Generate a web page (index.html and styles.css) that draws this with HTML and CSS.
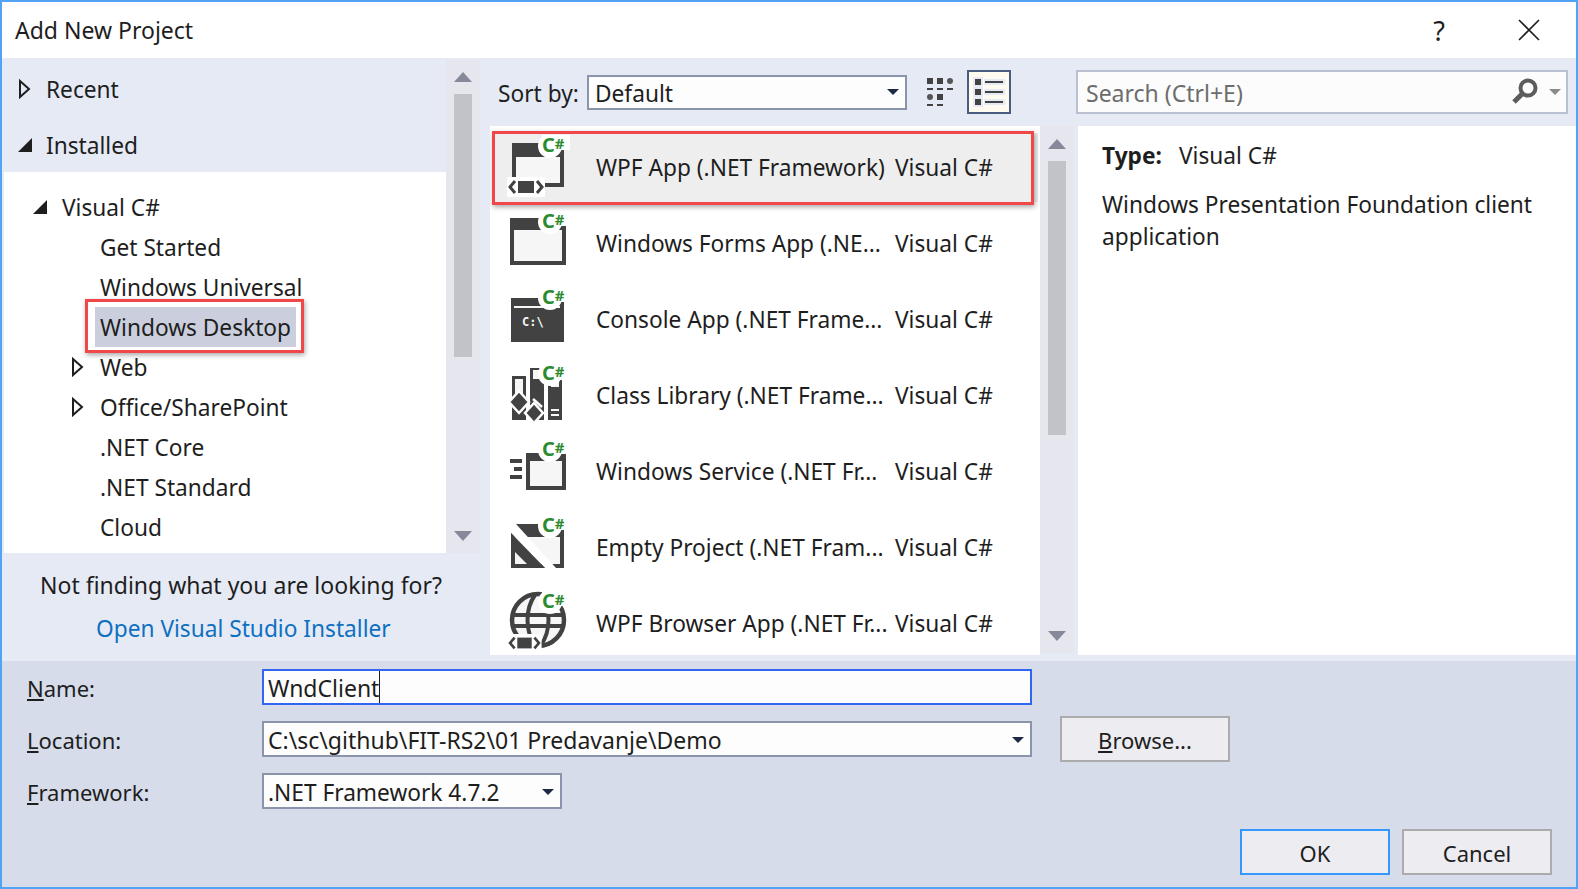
FILE: index.html
```html
<!DOCTYPE html>
<html lang="en">
<head>
  <meta charset="UTF-8" />
  <title>Add New Project</title>
  <link rel="stylesheet" href="styles.css">
</head>
<body>
  <svg class="defs" aria-hidden="true">
    <symbol id="halo" viewBox="0 0 66 66">
      <circle cx="46" cy="11" r="12" fill="#fff"/>
      <rect x="38" y="0" width="28" height="15" fill="#fff"/>
    </symbol>
    <symbol id="xaml" viewBox="0 0 38 20">
      <rect x="0" y="0" width="38" height="20" fill="#fff"/>
      <path d="M8 4 3 10l5 6M30 4l5 6-5 6" fill="none" stroke="#424242" stroke-width="3"/>
      <rect x="11" y="4" width="16" height="12" fill="#424242"/>
    </symbol>
  </svg>

  <div class="dialog">
    <header class="titlebar">
      <span class="title">Add New Project</span>
      <span class="help">?</span>
      <svg class="close" width="22" height="22" viewBox="0 0 22 22"><path d="M1 1 21 21M21 1 1 21" stroke="#1e1e1e" stroke-width="1.6" fill="none"/></svg>
    </header>

    <div class="main">
      <aside class="left">
        <div class="left-top">
          <nav class="nav">
            <div class="nav-head">
              <div class="head-row">
                <svg class="arrow" width="14" height="20" viewBox="0 0 14 20"><path d="M3 2 12 10 3 18Z" fill="none" stroke="#1e1e1e" stroke-width="2"/></svg>
                Recent
              </div>
              <div class="head-row">
                <svg class="arrow arrow-open" width="16" height="16" viewBox="0 0 16 16"><path d="M15 1V15H1Z" fill="#1e1e1e"/></svg>
                Installed
              </div>
            </div>
            <div class="tree">
              <div class="tree-row lvl1">
                <svg class="arrow" width="16" height="16" viewBox="0 0 16 16"><path d="M15 1V15H1Z" fill="#1e1e1e"/></svg>
                Visual C#
              </div>
              <div class="tree-row lvl2"><span class="node">Get Started</span></div>
              <div class="tree-row lvl2"><span class="node">Windows Universal</span></div>
              <div class="tree-row lvl2"><span class="node node-sel">Windows Desktop</span></div>
              <div class="tree-row lvl2 has-arrow">
                <svg class="arrow" width="14" height="20" viewBox="0 0 14 20"><path d="M3 2 12 10 3 18Z" fill="none" stroke="#1e1e1e" stroke-width="2"/></svg>
                <span class="node">Web</span>
              </div>
              <div class="tree-row lvl2 has-arrow">
                <svg class="arrow" width="14" height="20" viewBox="0 0 14 20"><path d="M3 2 12 10 3 18Z" fill="none" stroke="#1e1e1e" stroke-width="2"/></svg>
                <span class="node">Office/SharePoint</span>
              </div>
              <div class="tree-row lvl2"><span class="node">.NET Core</span></div>
              <div class="tree-row lvl2"><span class="node">.NET Standard</span></div>
              <div class="tree-row lvl2"><span class="node">Cloud</span></div>
            </div>
          </nav>
          <div class="vscroll left-scroll">
            <span class="up"></span>
            <span class="thumb"></span>
            <span class="down"></span>
          </div>
        </div>
        <div class="finding">
          <p class="finding-q">Not finding what you are looking for?</p>
          <a class="finding-link">Open Visual Studio Installer</a>
        </div>
      </aside>

      <section class="content">
        <div class="toolbar">
          <span class="sort-label">Sort by:</span>
          <div class="combo sort-combo"><span class="combo-text">Default</span><span class="caret"></span></div>
          <svg class="grid-icon" width="28" height="30" viewBox="0 0 28 30">
            <path d="M0 1h6v6H0zM10 1h6v6h-6z" fill="#424242"/><circle cx="23" cy="4" r="3" fill="#555"/>
            <path d="M0 11h6v2H0zM10 11h6v2h-6zM20 11h6v2h-6z" fill="#424242"/>
            <circle cx="3" cy="20" r="3" fill="#555"/><path d="M10 17h6v6h-6z" fill="#424242"/>
            <path d="M0 27h6v2H0zM10 27h6v2h-6z" fill="#424242"/>
          </svg>
          <div class="list-btn">
            <svg width="32" height="30" viewBox="0 0 32 30">
              <path d="M0 0h10v30H0zM11 2h21v6H11zM11 12h21v6H11zM11 22h21v6H11z" fill="#e6eaf5"/>
              <path d="M2 2h6v6H2zM2 12h6v6H2zM2 22h6v6H2z" fill="#424242"/>
              <path d="M12 4h18v2H12zM12 14h18v2H12zM12 24h18v2H12z" fill="#424242"/>
            </svg>
          </div>
          <div class="search">
            <span class="search-text">Search (Ctrl+E)</span>
            <svg width="28" height="28" viewBox="0 0 28 28"><circle cx="17" cy="10" r="7.500" fill="none" stroke="#5c5c5c" stroke-width="4"/><path d="M12 15 3 24" stroke="#5c5c5c" stroke-width="5" fill="none"/></svg>
            <span class="caret caret-gray"></span>
          </div>
        </div>

        <div class="content-body">
          <div class="list">
            <div class="row row-sel">
              <span class="pic">
                <svg viewBox="0 0 66 66">
                  <rect x="8" y="8" width="52" height="44" fill="#424242"/>
                  <rect x="12" y="22" width="44" height="26" fill="#f6f6f6"/>
                  <use href="#xaml" x="3" y="42" width="38" height="20"/>
                  <use href="#halo" width="66" height="66"/>
                </svg>
                <span class="badge">C<span class="badge-h">#</span></span>
              </span>
              <span class="row-name">WPF App (.NET Framework)</span><span class="row-type">Visual C#</span>
            </div>
            <div class="row">
              <span class="pic">
                <svg viewBox="0 0 66 66">
                  <rect x="6" y="7" width="56" height="47" fill="#424242"/>
                  <rect x="10" y="19" width="48" height="31" fill="#f6f6f6"/>
                  <use href="#halo" width="66" height="66"/>
                </svg>
                <span class="badge">C<span class="badge-h">#</span></span>
              </span>
              <span class="row-name">Windows Forms App (.NE...</span><span class="row-type">Visual C#</span>
            </div>
            <div class="row">
              <span class="pic">
                <svg viewBox="0 0 66 66">
                  <rect x="7" y="11" width="53" height="44" fill="#424242"/>
                  <rect x="10" y="19" width="46" height="2" fill="#f6f6f6"/>
                  <use href="#halo" width="66" height="66"/>
                </svg>
                <span class="prompt">C:\</span>
                <span class="badge">C<span class="badge-h">#</span></span>
              </span>
              <span class="row-name">Console App (.NET Frame...</span><span class="row-type">Visual C#</span>
            </div>
            <div class="row">
              <span class="pic">
                <svg viewBox="0 0 66 66">
                  <rect x="8" y="13" width="14" height="44" fill="#424242"/>
                  <rect x="11" y="16" width="8" height="15" fill="#f6f6f6"/>
                  <rect x="26" y="5" width="14" height="52" fill="#424242"/>
                  <rect x="29" y="7" width="8" height="9" fill="#f6f6f6"/>
                  <rect x="44" y="17" width="14" height="40" fill="#424242"/>
                  <rect x="47" y="17" width="8" height="7" fill="#f6f6f6"/>
                  <rect x="47" y="46" width="8" height="2" fill="#f6f6f6"/>
                  <rect x="47" y="51" width="8" height="2" fill="#f6f6f6"/>
                  <path d="M15 28 25 39 15 50 5 39Z" fill="#424242" stroke="#fff" stroke-width="2.500"/>
                  <path d="M30 40 39 50 30 60 21 50Z" fill="#424242" stroke="#fff" stroke-width="2.500"/>
                  <path d="M29 36 38 44" stroke="#fff" stroke-width="2.500" fill="none"/>
                  <use href="#halo" width="66" height="66"/>
                </svg>
                <span class="badge">C<span class="badge-h">#</span></span>
              </span>
              <span class="row-name">Class Library (.NET Frame...</span><span class="row-type">Visual C#</span>
            </div>
            <div class="row">
              <span class="pic">
                <svg viewBox="0 0 66 66">
                  <rect x="22" y="14" width="40" height="37" fill="#424242"/>
                  <rect x="26" y="22" width="32" height="25" fill="#f6f6f6"/>
                  <path d="M6 20H18V24H6ZM10 28H18V32H10ZM6 36H18V40H6Z" fill="#424242"/>
                  <use href="#halo" width="66" height="66"/>
                </svg>
                <span class="badge">C<span class="badge-h">#</span></span>
              </span>
              <span class="row-name">Windows Service (.NET Fr...</span><span class="row-type">Visual C#</span>
            </div>
            <div class="row">
              <span class="pic">
                <svg viewBox="0 0 66 66">
                  <rect x="7" y="9" width="53" height="44" fill="#424242"/>
                  <rect x="11" y="22" width="45" height="27" fill="#f6f6f6"/>
                  <path d="M7 9H12L52 53H41L7 18Z" fill="#fff"/>
                  <path d="M7 18 41 53H27L7 33Z" fill="#424242"/>
                  <path d="M11 38 22 49H11Z" fill="#f6f6f6"/>
                  <use href="#halo" width="66" height="66"/>
                </svg>
                <span class="badge">C<span class="badge-h">#</span></span>
              </span>
              <span class="row-name">Empty Project (.NET Fram...</span><span class="row-type">Visual C#</span>
            </div>
            <div class="row">
              <span class="pic">
                <svg viewBox="0 0 66 66">
                  <circle cx="34" cy="29" r="26" fill="#f6f6f6" stroke="#424242" stroke-width="4.500"/>
                  <path d="M8 24H60M8 35H60M31 4C21 18 21 40 31 54M37 4C47 18 47 40 37 54" fill="none" stroke="#424242" stroke-width="4"/>
                  <use href="#xaml" x="3" y="43" width="35" height="18"/>
                  <use href="#halo" width="66" height="66"/>
                </svg>
                <span class="badge">C<span class="badge-h">#</span></span>
              </span>
              <span class="row-name">WPF Browser App (.NET Fr...</span><span class="row-type">Visual C#</span>
            </div>
          </div>

          <div class="vscroll list-scroll">
            <span class="up"></span>
            <span class="thumb"></span>
            <span class="down"></span>
          </div>

          <div class="details">
            <p class="details-type"><b>Type:</b><span>Visual C#</span></p>
            <p class="details-desc">Windows Presentation Foundation client application</p>
          </div>
        </div>
      </section>
    </div>

    <footer class="bottom">
      <div class="form">
        <label class="form-label"><u>N</u>ame:</label>
        <div class="field field-focus">WndClient<span class="text-caret"></span></div>
        <span></span>

        <label class="form-label"><u>L</u>ocation:</label>
        <div class="field">C:\sc\github\FIT-RS2\01 Predavanje\Demo<span class="caret"></span></div>
        <button class="btn btn-browse" type="button"><u>B</u>rowse...</button>

        <label class="form-label"><u>F</u>ramework:</label>
        <div class="field field-short">.NET Framework 4.7.2<span class="caret"></span></div>
        <span></span>
      </div>
      <div class="actions">
        <button class="btn btn-ok" type="button">OK</button>
        <button class="btn" type="button">Cancel</button>
      </div>
    </footer>
  </div>
</body>
</html>
```

FILE: styles.css
```css
*, *::after {
  box-sizing: border-box;
}
html, body {
  margin: 0;
  padding: 0;
}
body {
  font-family: "Noto Sans", "Open Sans", Arial, sans-serif;
  font-size: 22.7px;
  color: #1e1e1e;
  background: #fff;
}
.defs {
  display: block;
  width: 0;
  height: 0;
}

.dialog {
  width: 1578px;
  height: 889px;
  border: 2px solid #52a2f5;
  display: flex;
  flex-direction: column;
  background: #fff;
  overflow: hidden;
}

/* title */
.titlebar {
  height: 56px;
  flex: none;
  display: flex;
  align-items: center;
  padding-left: 13px;
  background: #fff;
}
.title {
  flex: 1;
  font-size: 23px;
}
.help {
  font-size: 27px;
  margin-right: 73px;
}
.close {
  margin-right: 36px;
}

/* main area */
.main {
  height: 603px;
  flex: none;
  display: flex;
  background: #e6eaf5;
}
.left {
  width: 478px;
  flex: none;
  display: flex;
  flex-direction: column;
}
.left-top {
  height: 495px;
  flex: none;
  display: flex;
}
.nav {
  width: 444px;
  flex: none;
  display: flex;
  flex-direction: column;
}
.nav-head {
  height: 114px;
  flex: none;
  padding-top: 3px;
}
.head-row {
  height: 56px;
  display: flex;
  align-items: center;
  padding-left: 15px;
}
.head-row .arrow {
  margin-right: 15px;
}
.head-row .arrow-open {
  margin-right: 13px;
}
.tree {
  flex: 1;
  margin-left: 2px;
  background: #fff;
  padding-top: 15px;
}
.tree-row {
  height: 40px;
  display: flex;
  align-items: center;
}
.lvl1 {
  padding-left: 28px;
}
.lvl1 .arrow {
  margin-right: 14px;
}
.lvl2 {
  padding-left: 91px;
}
.lvl2.has-arrow {
  padding-left: 66px;
}
.lvl2.has-arrow .arrow {
  margin-right: 11px;
}
.node {
  padding: 0 5px;
  height: 40px;
  line-height: 42px;
  position: relative;
}
.node-sel {
  background: #cbcfdd;
}
.node-sel::after {
  content: "";
  position: absolute;
  left: -10px;
  right: -8px;
  top: -8px;
  bottom: -6px;
  border: 3px solid #f04848;
  box-shadow: 1px 2px 5px rgba(0, 0, 0, 0.35);
}

.vscroll {
  width: 34px;
  flex: none;
  background: #e6e6ee;
  display: flex;
  flex-direction: column;
  align-items: center;
}
.up, .down {
  width: 0;
  height: 0;
  border-left: 9px solid transparent;
  border-right: 9px solid transparent;
  flex: none;
}
.up {
  border-bottom: 10px solid #868999;
}
.down {
  border-top: 10px solid #868999;
  margin-top: auto;
}
.thumb {
  width: 18px;
  background: #c2c3c9;
  flex: none;
}
.left-scroll {
  margin-top: 2px;
  padding: 12px 0 12px;
}
.left-scroll .thumb {
  height: 263px;
  margin-top: 12px;
}
.list-scroll {
  margin-bottom: 2px;
  padding: 13px 0 12px;
}
.list-scroll .thumb {
  height: 274px;
  margin-top: 12px;
}

.finding {
  flex: 1;
  padding: 14px 0 0 38px;
}
.finding-q {
  margin: 0;
  height: 36px;
  line-height: 36px;
  font-size: 23px;
}
.finding-link {
  display: block;
  margin: 8px 0 0 56px;
  line-height: 36px;
  color: #0e70c0;
}

/* toolbar + list */
.content {
  flex: 1;
  display: flex;
  flex-direction: column;
  min-width: 0;
}
.toolbar {
  height: 68px;
  flex: none;
  display: flex;
  align-items: center;
  padding-left: 18px;
}
.sort-label {
  width: 89px;
  flex: none;
  padding-top: 2px;
}
.combo {
  width: 320px;
  height: 35px;
  border: 2px solid #8a94ab;
  background: #fdfdfd;
  display: flex;
  align-items: center;
  padding-left: 6px;
  flex: none;
}
.combo-text {
  padding-top: 2px;
}
.caret {
  width: 0;
  height: 0;
  margin-left: auto;
  margin-right: 6px;
  border-left: 6px solid transparent;
  border-right: 6px solid transparent;
  border-top: 6px solid #1e2a45;
}
.grid-icon {
  margin-left: 20px;
  flex: none;
}
.list-btn {
  width: 44px;
  height: 44px;
  margin-left: 12px;
  flex: none;
  border: 2px solid #4a5c80;
  background: #fffbf0;
  display: flex;
  align-items: center;
  justify-content: center;
}
.search {
  width: 492px;
  height: 44px;
  margin-left: 65px;
  flex: none;
  border: 2px solid #b8c0d2;
  background: #fcfcfc;
  display: flex;
  align-items: center;
  padding-left: 8px;
}
.search-text {
  color: #6d6d6d;
  flex: 1;
  padding-top: 2px;
  font-size: 23px;
}
.caret-gray {
  border-top-color: #8a8a8a;
  margin-left: 10px;
  margin-right: 5px;
}

.content-body {
  flex: 1;
  display: flex;
  min-height: 0;
  padding-bottom: 6px;
}
.list {
  width: 550px;
  margin-left: 10px;
  flex: none;
  background: #fff;
  padding-top: 4px;
  overflow: hidden;
}
.row {
  height: 76px;
  display: flex;
  align-items: center;
  padding-left: 14px;
  position: relative;
}
.row-sel {
  background: linear-gradient(#eee, #eee) 3px 3px / 545px 69px no-repeat;
}
.row-sel::after {
  content: "";
  position: absolute;
  left: 2px;
  top: 1px;
  width: 542px;
  height: 74px;
  border: 3px solid #f04848;
  box-shadow: 1px 2px 5px rgba(0, 0, 0, 0.35);
}
.pic {
  width: 66px;
  height: 66px;
  flex: none;
  position: relative;
}
.pic svg {
  display: block;
  width: 66px;
  height: 66px;
}
/* language badge sits over the project icon */
.badge {
  position: absolute;
  left: 38px;
  top: 0;
  font-size: 20px;
  font-weight: bold;
  line-height: 20px;
  color: #2f8b2f;
  white-space: nowrap;
}
.badge-h {
  font-size: 15px;
  position: relative;
  top: -3px;
}
.prompt {
  position: absolute;
  left: 18px;
  top: 27px;
  font: bold 12px/16px "DejaVu Sans Mono", monospace;
  color: #f6f6f6;
}
.row-name {
  width: 299px;
  margin-left: 26px;
  padding-bottom: 2px;
  flex: none;
  white-space: nowrap;
}
.row-type {
  white-space: nowrap;
  padding-bottom: 2px;
}
.details {
  margin-left: 4px;
  flex: 1;
  background: #fff;
  padding: 14px 24px 0;
}
.details-type {
  margin: 0;
  height: 32px;
  line-height: 32px;
  display: flex;
}
.details-type b {
  width: 77px;
}
.details-desc {
  margin: 17px 0 0;
  line-height: 32px;
}

/* bottom form */
.bottom {
  flex: 1;
  background: #d6dcea;
  padding-top: 8px;
}
.form {
  display: grid;
  grid-template-columns: 260px 770px 1fr;
  grid-auto-rows: 36px;
  row-gap: 16px;
  align-items: center;
}
.form-label {
  padding: 2px 0 0 25px;
  font-size: 22px;
}
.field {
  height: 36px;
  border: 2px solid #8a94ab;
  background: #fdfdfd;
  display: flex;
  align-items: center;
  padding: 2px 0 0 4px;
  white-space: nowrap;
  font-size: 23px;
}
.field-focus {
  border-color: #3366f0;
}
.text-caret {
  width: 1px;
  height: 32px;
  margin-top: -2px;
  background: #1e1e1e;
}
.field-short {
  width: 300px;
  font-size: 22.7px;
}
.btn {
  font: inherit;
  font-size: 22px;
  color: inherit;
  width: 150px;
  height: 46px;
  padding: 2px 0 0;
  background: #ececf1;
  border: 2px solid #acacac;
}
.btn-browse {
  width: 170px;
  margin-left: 28px;
  align-self: center;
}
.btn-ok {
  border-color: #3399ff;
}
.actions {
  display: flex;
  justify-content: flex-end;
  gap: 12px;
  margin-top: 20px;
  padding-right: 24px;
}
```
